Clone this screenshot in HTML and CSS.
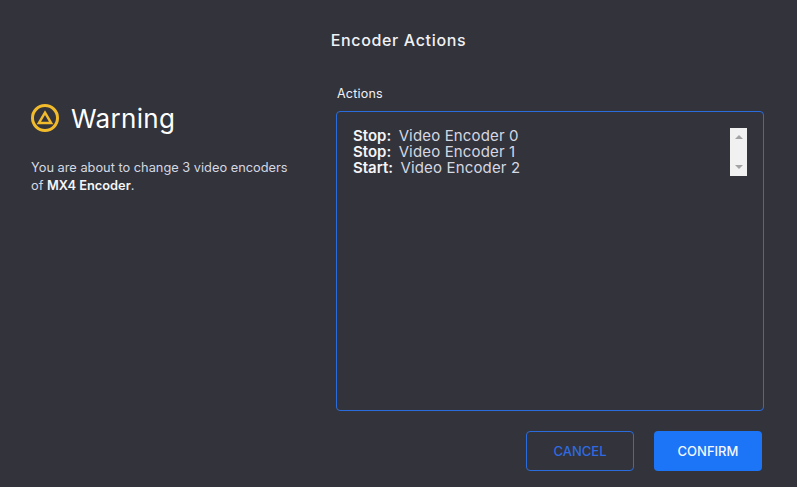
FILE: index.html
```html
<!DOCTYPE html>
<html lang="en">
<head>
    <meta charset="UTF-8">
    <meta name="viewport" content="width=device-width, initial-scale=1.0">
    <title>Encoder Actions</title>
    <link rel="stylesheet" href="styles.css">
</head>
<body>
    <div class="dialog">
        <h2 class="dialog-title">Encoder Actions</h2>

        <div class="dialog-body">
            <!-- Warning message -->
            <div class="warning-col">
                <div class="warning-head">
                    <svg class="warning-icon" width="28" height="28" viewBox="0 0 28 28" fill="none" stroke="#f1bb2c">
                        <circle cx="14" cy="14" r="12.5" stroke-width="3"/>
                        <path d="M14 8.6 L20.1 18.9 H7.9 Z" stroke-width="2.5" stroke-linejoin="miter"/>
                    </svg>
                    <span class="warning-text">Warning</span>
                </div>
                <div class="warning-msg">
                    <div>You are about to change 3 video encoders</div>
                    <div>of <b>MX4 Encoder</b>.</div>
                </div>
            </div>

            <!-- Actions list -->
            <div class="actions-col">
                <div class="actions-label">Actions</div>
                <div class="actions-box">
                    <div class="actions-list">
                        <div><b>Stop:</b>&nbsp; <span class="encoder">Video Encoder 0</span></div>
                        <div><b>Stop:</b>&nbsp; <span class="encoder">Video Encoder 1</span></div>
                        <div><b>Start:</b>&nbsp; <span class="encoder">Video Encoder 2</span></div>
                    </div>
                    <div class="scrollbar">
                        <span class="arrow-up"></span>
                        <span class="arrow-down"></span>
                    </div>
                </div>
            </div>
        </div>

        <div class="dialog-footer">
            <button class="btn btn-cancel">CANCEL</button>
            <button class="btn btn-confirm">CONFIRM</button>
        </div>
    </div>
</body>
</html>
```

FILE: styles.css
```css
/* General Styles */
body {
    margin: 0;
    background-color: #32333b;
    color: #d5d8e2;
    font-family: 'Inter', 'Lato', sans-serif;
}

.dialog {
    width: 797px;
    height: 487px;
    overflow: hidden;
}

.dialog-title {
    margin: 0;
    padding-top: 30px;
    height: 55px;
    line-height: 20px;
    font-size: 16px;
    font-weight: 500;
    letter-spacing: 0.65px;
    color: #f0f1f5;
    text-align: center;
}

.dialog-body {
    display: flex;
    padding: 0 33px 0 31px;
}

/* Left column */
.warning-col {
    width: 305px;
    padding-top: 18px;
}

.warning-head {
    display: flex;
    align-items: center;
    gap: 12px;
    height: 30px;
}

.warning-text {
    font-size: 26px;
    letter-spacing: 0.3px;
    color: #ffffff;
}

.warning-msg {
    margin-top: 26px;
    font-size: 12.8px;
    line-height: 18px;
}

.warning-msg b {
    font-weight: 600;
    color: #f4f5f8;
}

/* Right column */
.actions-col {
    width: 428px;
}

.actions-label {
    height: 26px;
    padding-left: 1px;
    line-height: 17px;
    font-size: 12.5px;
    font-weight: 400;
    letter-spacing: 0.2px;
    color: #f0f1f5;
}

.actions-box {
    display: flex;
    justify-content: space-between;
    align-items: flex-start;
    box-sizing: border-box;
    height: 300px;
    padding: 16px 16px 0 16px;
    border: 1px solid #2a6cdc;
    border-radius: 4px;
}

.actions-list {
    font-size: 15px;
    line-height: 16px;
}

.actions-list b {
    font-weight: 600;
    color: #f4f5f8;
}

.encoder {
    margin-left: -1px;
    letter-spacing: 0.15px;
}

.scrollbar {
    display: flex;
    flex-direction: column;
    justify-content: space-between;
    align-items: center;
    box-sizing: border-box;
    width: 17px;
    height: 48px;
    padding: 7px 0;
    background-color: #f1f1f1;
}

.arrow-up {
    border-left: 4px solid transparent;
    border-right: 4px solid transparent;
    border-bottom: 4px solid #a3a3a3;
}

.arrow-down {
    border-left: 4px solid transparent;
    border-right: 4px solid transparent;
    border-top: 4px solid #a3a3a3;
}

/* Button Styles */
.dialog-footer {
    display: flex;
    justify-content: flex-end;
    gap: 20px;
    padding: 20px 35px 0 0;
}

.btn {
    box-sizing: border-box;
    width: 108px;
    height: 40px;
    border-radius: 4px;
    font-family: inherit;
    font-size: 13px;
    font-weight: 500;
}

.btn-cancel {
    background-color: transparent;
    border: 1px solid #2a6cdc;
    color: #2f6be0;
}

.btn-confirm {
    background-color: #1c74f6;
    border: none;
    color: #f4f7ff;
}
```
